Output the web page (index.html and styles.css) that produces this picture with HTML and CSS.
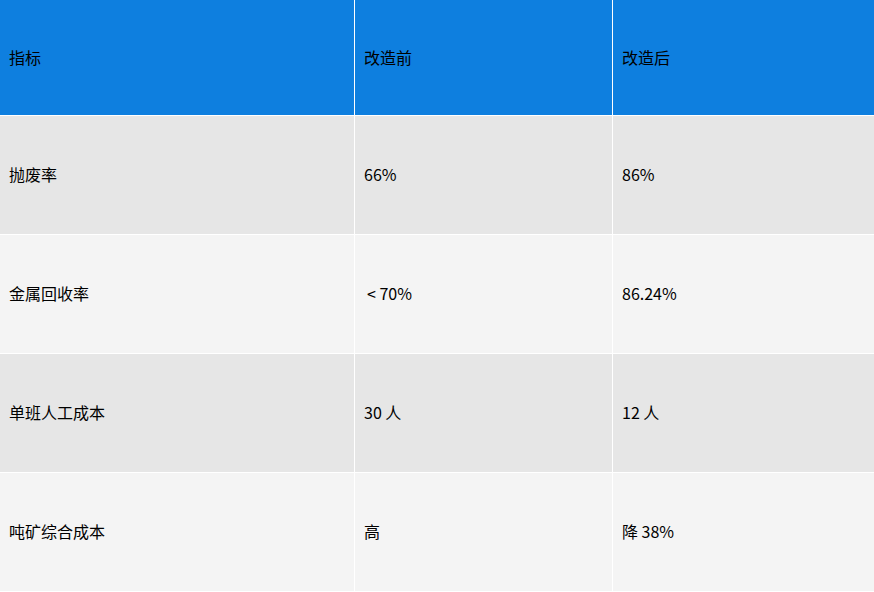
FILE: index.html
```html
<!DOCTYPE html>
<html lang="zh">
<head>
<meta charset="utf-8">
<link rel="stylesheet" href="styles.css">
</head>
<body>
<div class="table">
  <div class="cell head">指标</div>
  <div class="cell head">改造前</div>
  <div class="cell head">改造后</div>

  <div class="cell odd">抛废率</div>
  <div class="cell odd">66%</div>
  <div class="cell odd">86%</div>

  <div class="cell even">金属回收率</div>
  <div class="cell even lt">&lt; 70%</div>
  <div class="cell even">86.24%</div>

  <div class="cell odd">单班人工成本</div>
  <div class="cell odd">30 人</div>
  <div class="cell odd">12 人</div>

  <div class="cell even">吨矿综合成本</div>
  <div class="cell even">高</div>
  <div class="cell even">降 38%</div>
</div>
</body>
</html>
```
FILE: styles.css
```css
html, body {
  margin: 0;
  padding: 0;
  background: #ffffff;
  overflow: hidden;
}
.table {
  display: grid;
  grid-template-columns: 354px 257px 1fr;
  grid-template-rows: 115px repeat(4, 118px);
  gap: 1px;
  background: #ffffff;
  width: 874px;
  font-family: "Noto Sans CJK SC", "Noto Sans", sans-serif;
  font-size: 16px;
  line-height: 20px;
  color: #000000;
}
.cell {
  display: flex;
  align-items: center;
  padding-left: 9px;
  padding-bottom: 2px;
}
.head { background: #0e7fdf; }
.odd { background: #e6e6e6; }
.even { background: #f4f4f4; }
.lt { padding-left: 12px; }
```
